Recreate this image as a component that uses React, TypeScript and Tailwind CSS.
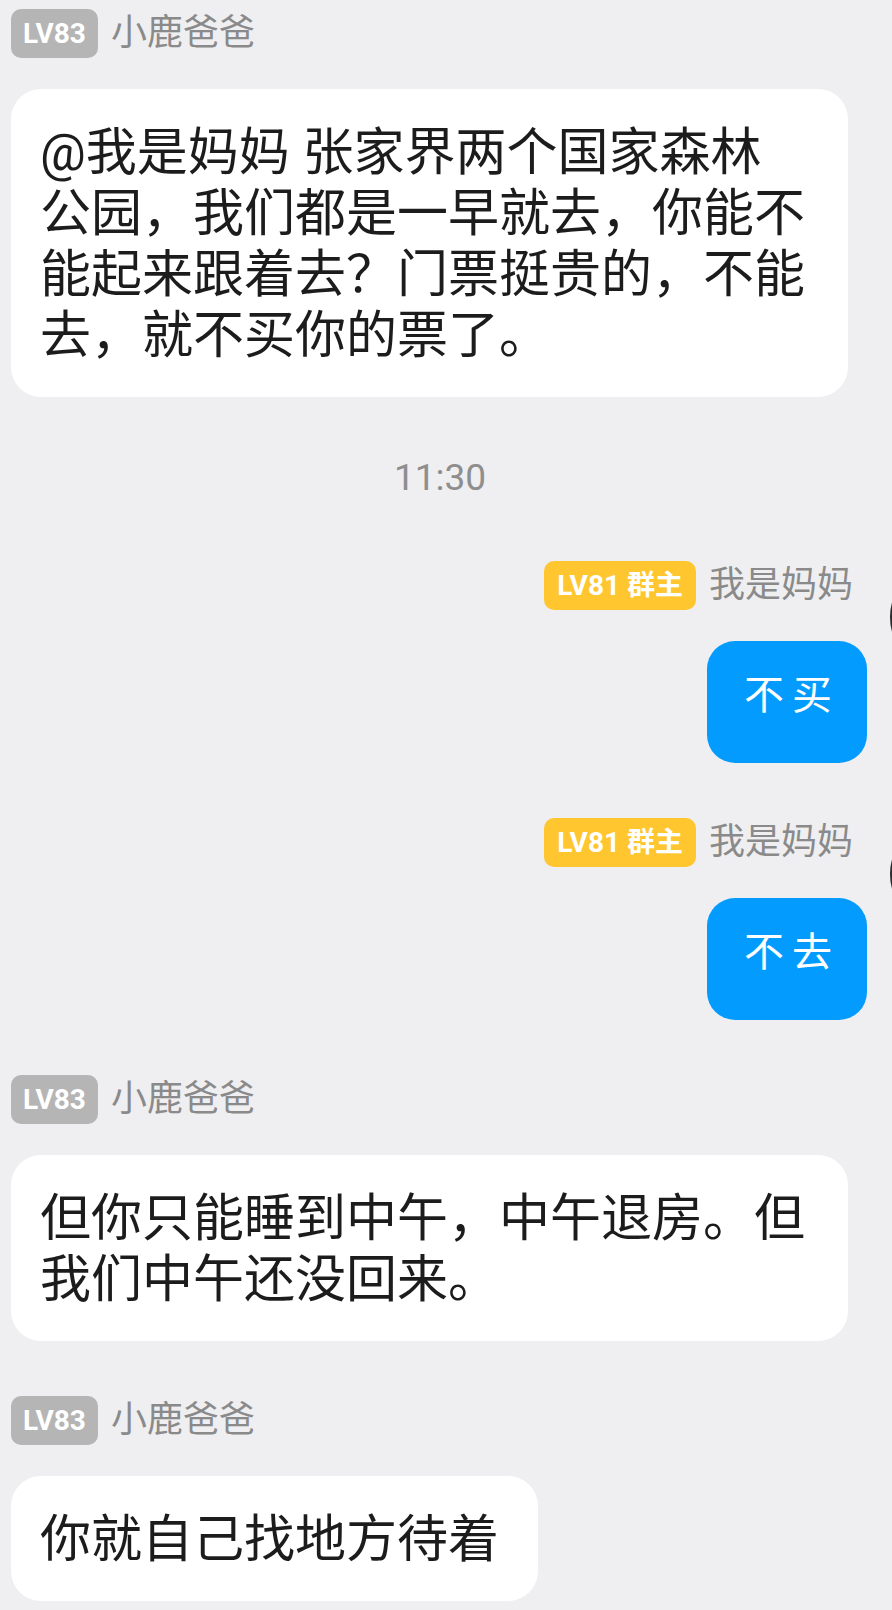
const FONT = 'font-["Roboto","Noto_Sans_CJK_SC",sans-serif]';

type Msg =
  | { side: "left"; level: string; name: string; text: string }
  | { side: "right"; level: string; name: string; text: string }
  | { side: "time"; text: string };

const messages: Msg[] = [
  {
    side: "left",
    level: "LV83",
    name: "小鹿爸爸",
    text: "@我是妈妈 张家界两个国家森林公园，我们都是一早就去，你能不能起来跟着去？门票挺贵的，不能去，就不买你的票了。",
  },
  { side: "time", text: "11:30" },
  { side: "right", level: "LV81 群主", name: "我是妈妈", text: "不买" },
  { side: "right", level: "LV81 群主", name: "我是妈妈", text: "不去" },
  { side: "left", level: "LV83", name: "小鹿爸爸", text: "但你只能睡到中午，中午退房。但我们中午还没回来。" },
  { side: "left", level: "LV83", name: "小鹿爸爸", text: "你就自己找地方待着" },
];

export default function App() {
  return (
    <div className={`w-[892px] min-h-[1610px] overflow-hidden bg-[#efeff2] pl-[11px] pt-[9px] ${FONT}`}>
      {messages.map((m, i) => {
        const first = i === 0;
        if (m.side === "time") {
          return (
            <div key={i} className="mt-[59px] mb-[61px] pr-[23px] text-center text-[37px] leading-[44px] text-[#8e8e8e]">
              {m.text}
            </div>
          );
        }
        if (m.side === "right") {
          return <RightMsg key={i} level={m.level} name={m.name} text={m.text} gap={i === 2 ? "" : "mt-[55px]"} />;
        }
        return <LeftMsg key={i} level={m.level} name={m.name} text={m.text} gap={first ? "" : "mt-[55px]"} />;
      })}
    </div>
  );
}

function LeftMsg({ level, name, text, gap }: { level: string; name: string; text: string; gap: string }) {
  return (
    <div className={`flex flex-col items-start ${gap}`}>
      <div className="flex items-center gap-[13px] h-[49px]">
        <span className="h-[49px] px-3 rounded-[10px] bg-[#b5b5b5] text-white text-[28px] leading-[49px] font-bold">
          {level}
        </span>
        <span className="text-[36px] leading-[49px] text-[#8a8a8a]">{name}</span>
      </div>
      <div className="mt-[31px] max-w-[837px] bg-white rounded-[30px] pl-[29px] pr-[39px] pt-[33px] pb-[31px] text-[51px] leading-[61px] text-[#1c1c1c]">
        {text}
      </div>
    </div>
  );
}

function RightMsg({ level, name, text, gap }: { level: string; name: string; text: string; gap: string }) {
  return (
    <div className={`flex items-start justify-end mr-[-110px] ${gap}`}>
      <div className="flex flex-col items-end">
        <div className="flex items-center gap-[13px] h-[49px] pr-[14px]">
          <span className="h-[49px] px-[13px] rounded-[10px] bg-[#ffc630] text-white text-[28px] leading-[49px] font-bold">
            {level}
          </span>
          <span className="text-[36px] leading-[49px] text-[#8a8a8a]">{name}</span>
        </div>
        <div className="mt-[31px] h-[122px] bg-[#039cfe] rounded-[28px] pl-[37px] pr-[27px] pt-[35px] text-[40px] leading-[40px] tracking-[8px] text-white">
          {text}
        </div>
      </div>
      <div className="ml-[23px] w-[112px] h-[112px] shrink-0 rounded-full bg-[#2b2b2b]" />
    </div>
  );
}
